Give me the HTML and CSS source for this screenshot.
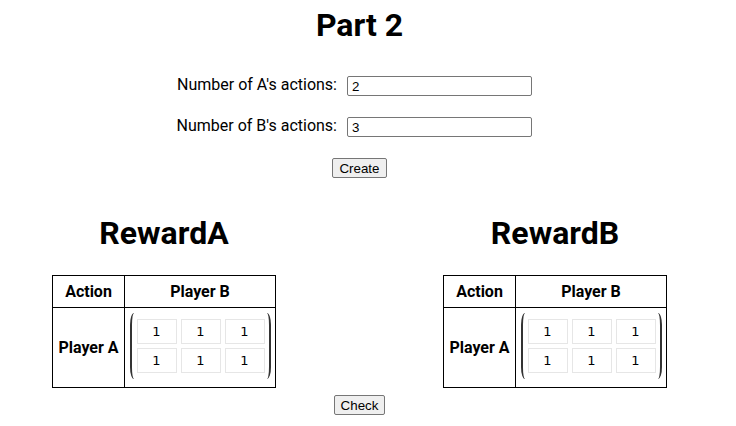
FILE: index.html
```html
<!DOCTYPE html>
<html>
<head>
<meta charset="utf-8">
<link rel="stylesheet" href="styles.css">
</head>
<body>
<div class="page">
  <h1 class="title">Part 2</h1>
  <div class="form">
    <label class="form-label">Number of A's actions:</label>
    <input class="form-input" type="text" value="2">
    <label class="form-label">Number of B's actions:</label>
    <input class="form-input" type="text" value="3">
  </div>
  <div class="actions actions-create"><button class="btn">Create</button></div>
  <div class="rewards">
    <section class="reward">
      <h2 class="reward-title">RewardA</h2>
      <table class="reward-table">
        <tr><th class="col-action">Action</th><th class="col-player">Player B</th></tr>
        <tr>
          <th class="col-action">Player A</th>
          <td class="col-player">
            <div class="matrix">
              <input class="cell" value="1"><input class="cell" value="1"><input class="cell" value="1">
              <input class="cell" value="1"><input class="cell" value="1"><input class="cell" value="1">
            </div>
          </td>
        </tr>
      </table>
    </section>
    <section class="reward">
      <h2 class="reward-title">RewardB</h2>
      <table class="reward-table">
        <tr><th class="col-action">Action</th><th class="col-player">Player B</th></tr>
        <tr>
          <th class="col-action">Player A</th>
          <td class="col-player">
            <div class="matrix">
              <input class="cell" value="1"><input class="cell" value="1"><input class="cell" value="1">
              <input class="cell" value="1"><input class="cell" value="1"><input class="cell" value="1">
            </div>
          </td>
        </tr>
      </table>
    </section>
  </div>
  <div class="actions actions-check"><button class="btn">Check</button></div>
</div>
</body>
</html>
```

FILE: styles.css
```css
html, body {
  margin: 0;
  padding: 0;
  background: #fff;
}
body {
  font-family: Roboto, "Liberation Sans", sans-serif;
  color: #000;
}
.page {
  width: 703px;
  margin-left: 8px;
  padding-top: 6px;
}
.title {
  margin: 0;
  font-size: 32px;
  line-height: 38px;
  font-weight: 700;
  text-align: center;
}
.form {
  display: grid;
  grid-template-columns: 329px 185px;
  column-gap: 10px;
  row-gap: 21px;
  align-items: center;
  margin-top: 32px;
}
.form-label {
  font-size: 16px;
  line-height: 18px;
  text-align: right;
  margin-top: -2px;
}
.form-input {
  box-sizing: border-box;
  width: 185px;
  height: 20px;
  margin: 0;
  padding: 1px 4px;
  border: 1px solid #767676;
  border-radius: 2px;
  font-family: "Liberation Sans", Arial, sans-serif;
  font-size: 13.33px;
  color: #000;
}
.actions {
  display: flex;
  justify-content: center;
}
.actions-create {
  margin-top: 21px;
}
.actions-check {
  margin-top: 7px;
}
.btn {
  box-sizing: border-box;
  height: 20px;
  margin: 0;
  padding: 1px 6px;
  border: 1px solid #767676;
  border-radius: 2px;
  background: #efefef;
  font-family: "Liberation Sans", Arial, sans-serif;
  font-size: 13.33px;
  color: #000;
}
.rewards {
  display: flex;
  padding-left: 44px;
  gap: 167px;
  margin-top: 36px;
}
.reward {
  display: flex;
  flex-direction: column;
  align-items: center;
}
.reward-title {
  margin: 0 0 23px;
  font-size: 32px;
  line-height: 38px;
  font-weight: 700;
}
.reward-table {
  border-collapse: collapse;
  border: 1px solid #000;
}
.reward-table th,
.reward-table td {
  border: 1px solid #000;
  padding: 0;
  font-size: 16px;
  font-weight: 700;
  text-align: center;
}
.reward-table tr:first-child th {
  height: 31px;
}
.col-action {
  width: 71px;
}
.col-player {
  width: 150px;
}
.matrix {
  display: grid;
  grid-template-columns: repeat(3, 40px);
  column-gap: 4px;
  row-gap: 4px;
  width: max-content;
  margin: 5px auto 8px;
  padding: 6px 4px 6px 5px;
  border-left: 2px solid #333;
  border-right: 2px solid #333;
  border-radius: 4px / 12px;
}
.cell {
  box-sizing: border-box;
  width: 40px;
  height: 25px;
  margin: 0;
  padding: 0;
  border: 1px solid #e6e6e6;
  font-family: "DejaVu Sans", sans-serif;
  font-size: 13px;
  text-align: center;
  color: #000;
  background: #fff;
}
```
